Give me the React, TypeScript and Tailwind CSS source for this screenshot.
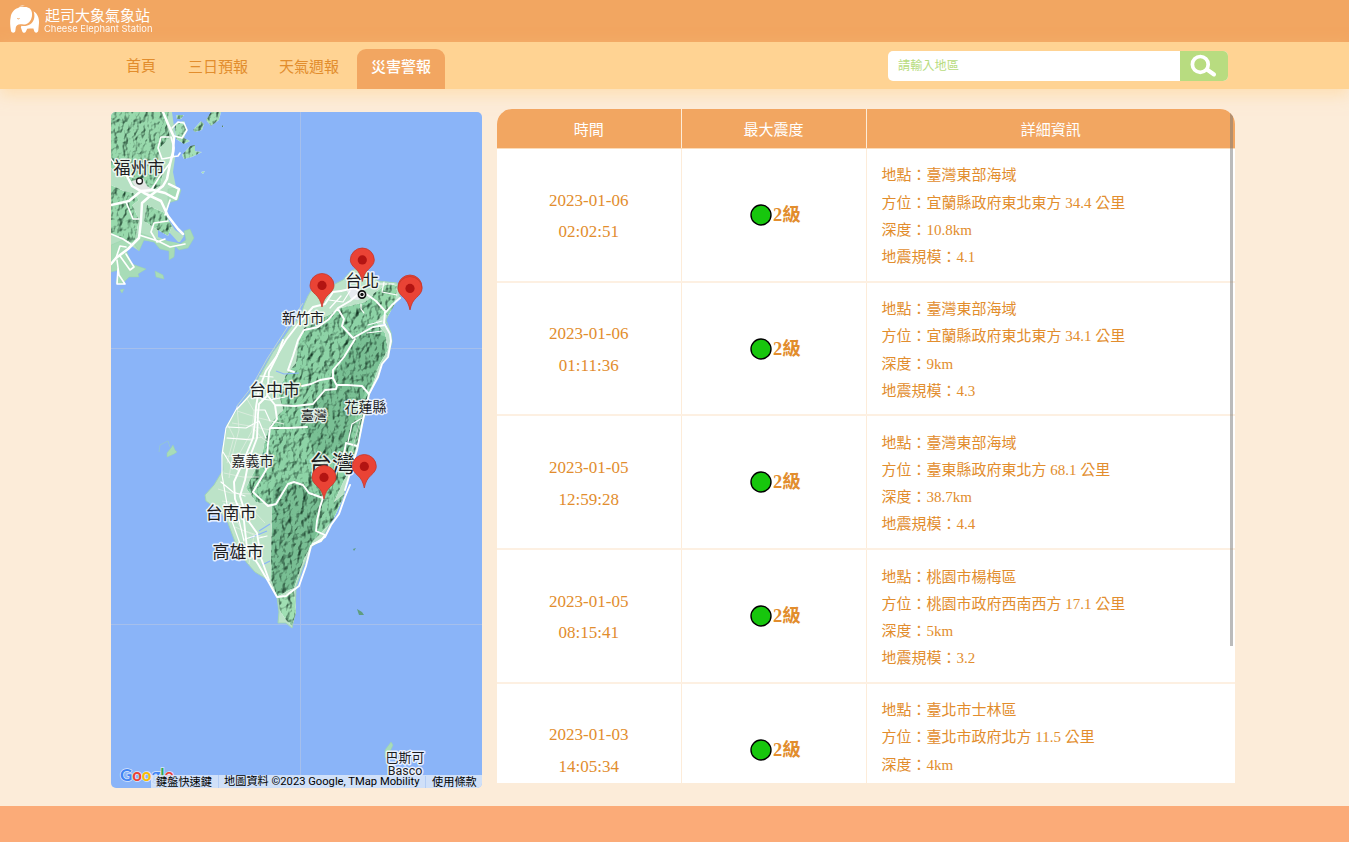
import React from "react";

const cjk = "font-['Noto_Sans_CJK_TC',sans-serif]";

const quakes = [
  { date: "2023-01-06", time: "02:02:51", place: "臺灣東部海域", dir: "宜蘭縣政府東北東方 34.4 公里", depth: "10.8km", mag: "4.1" },
  { date: "2023-01-06", time: "01:11:36", place: "臺灣東部海域", dir: "宜蘭縣政府東北東方 34.1 公里", depth: "9km", mag: "4.3" },
  { date: "2023-01-05", time: "12:59:28", place: "臺灣東部海域", dir: "臺東縣政府東北方 68.1 公里", depth: "38.7km", mag: "4.4" },
  { date: "2023-01-05", time: "08:15:41", place: "桃園市楊梅區", dir: "桃園市政府西南西方 17.1 公里", depth: "5km", mag: "3.2" },
  { date: "2023-01-03", time: "14:05:34", place: "臺北市士林區", dir: "臺北市政府北方 11.5 公里", depth: "4km", mag: "" },
];

function Elephant() {
  return (
    <svg className="h-[30px] w-[32px] shrink-0" viewBox="0 0 32 30">
      <path
        fill="#fff"
        d="M9 2.900C10.800 1.700 13 1.400 15 2.100C19.500 1.700 22.700 4 23 8C23.500 12.500 21.500 17.500 17.500 19C15.300 20 13 19.300 11.500 19.300C8.500 19.500 7.200 20.500 6.800 22.500L6.300 26C5.900 28.300 2.600 28.300 2 26C1.200 21 .7 16 1.700 12C2.200 7.800 5 4 9 2.900Z"
      />
      <path fill="#fff" d="M10 1.500C12 .3 14.500 0 16 1.100C14 .8 12 .9 10 1.500Z" />
      <path
        fill="#fff"
        d="M24.500 6.200C28.500 8.500 30.300 13 30 18L29.300 25.500C29 28.200 25.800 28.300 25.200 26L24.400 23.500H20.800L18.200 23.800L16.800 26.800C16 28.300 13.800 28 13.200 26.200L11.800 22.200L12.500 20.800C18.200 21.800 23.500 19.300 25 14C25.700 11 25.500 8.500 24.500 6.200Z"
      />
      <path d="M8.200 13.300C9 14.200 10.200 14 10.700 13" stroke="#f2a661" fill="none" strokeWidth="1" />
    </svg>
  );
}

function Pin({ x, y }: { x: number; y: number }) {
  return (
    <g transform={`translate(${x} ${y})`}>
      <path
        d="M0 0C-1.200 -6-3.200-9.500-6.500-12.500C-10-15.500-12-18.500-12-21.500A12 12 0 0 1 12-21.500C12-18.500 10-15.500 6.500-12.500C3.200-9.500 1.200-6 0 0Z"
        fill="#ea4335"
        stroke="#c5372b"
        strokeWidth=".8"
      />
      <circle cy="-21.600" r="4.600" fill="#b31412" />
    </g>
  );
}

function Label({ x, y, s, children }: { x: number; y: number; s: number; children: React.ReactNode }) {
  return (
    <text x={x} y={y} fontSize={s} textAnchor="middle" fill="#1d1d1f" stroke="#fff" strokeWidth="3" strokeOpacity=".8" strokeLinejoin="round" paintOrder="stroke">
      {children}
    </text>
  );
}

const island =
  "M304 305L308 296L311 291L320 287L333 285L343 280L350 272L359 267L367 272L378 281L397 283L400 297L392 307L386 320L391 333L392 342L388 356L382 363L378 377L370 392L366 412L363 422L357 450L345 490L342 500L335 515L325 533L323 540L312 546L303 567L296 587L295 613L292 628L286 623L278 623L279 612L277 597L268 580L255 572L247 563L238 550L228 523L219 510L206 501L205 495L214 485L223 470L222 452L227 425L238 408L250 393L263 370L273 352L282 340L291 327L300 317Z";
const mountains =
  "M341 308L325 317L304 328L298 345L296 363L286 375L278 392L283 410L272 422L266 436L262 455L255 470L246 488L256 502L272 505L271 580L277 597L293 588L302 562L312 542L322 532L333 520L345 493L334 502L348 472L359 440L364 410L371 390L380 362L388 350L385 333L376 322L394 305L397 290L375 294L365 302Z";
const hills =
  "M111 112H169L167 124L170 137L160 148L158 160L164 170L160 186L148 192L133 182L122 176L111 168ZM111 185L124 191L134 193L139 200L130 207L111 214ZM111 206L132 204L139 220L134 244L111 234ZM147 205L165 213L172 226L168 236L156 229L144 221Z";
const plain =
  "M111 112H172L175 134L172 146L175 158L173 172L176 187L179 189L169 204L166 216L175 230L184 236L180 242L160 243L143 240L139 251L130 245L125 256L111 268Z";

function TaiwanMap() {
  return (
    <svg className="block h-full w-full" viewBox="111 112 371 676" fontFamily="'Noto Sans CJK TC', sans-serif">
      <defs>
        <filter id="relief" x="0%" y="0%" width="100%" height="100%" colorInterpolationFilters="sRGB">
          <feTurbulence type="fractalNoise" baseFrequency=".19 .14" numOctaves="4" seed="8" result="n" />
          <feDiffuseLighting in="n" surfaceScale="2.700" diffuseConstant="1.280" lightingColor="#ffffff" result="l">
            <feDistantLight azimuth="215" elevation="50" />
          </feDiffuseLighting>
          <feComponentTransfer in="l" result="soft">
            <feFuncR type="linear" slope=".9" intercept=".1" />
            <feFuncG type="linear" slope=".78" intercept=".22" />
            <feFuncB type="linear" slope=".82" intercept=".18" />
          </feComponentTransfer>
          <feBlend in="SourceGraphic" in2="soft" mode="multiply" result="b" />
          <feComposite in="b" in2="SourceGraphic" operator="in" />
        </filter>
      </defs>
      <rect x="111" y="112" width="371" height="676" fill="#8ab4f8" />
      <path d="M300.500 112V788M111 348.500H482M111 624.500H482" stroke="#a5bfec" strokeWidth="1" />

      <path d={plain} fill="#b5e0c2" />
      <g fill="#a8dcb7" stroke="#9ad3ad" strokeWidth=".5">
        <path d="M168 189L177 188L181 190L178 200L168 203Z" />
        <path d="M111 245L140 233L162 241L172 240L180 244L186 240L184 231L190 229L194 238L188 248L179 250L175 246L174 257L169 260L169 251L160 249L154 242L144 240L139 251L133 242L126 250L132 264L146 269L138 274L139 277L129 277L122 284L116 283L119 270L111 272Z" />
        <path d="M155 271L163 275L164 279L156 277ZM120 290L124 289L122 293Z" />
        <path d="M385 750L391 742L393 745L388 756L385 758ZM167 453L171 448L173 445L175 450L177 452L174 454L167 457Z" />
      </g>
      <path d="M159 452L160 445L168 441L170 447" fill="none" stroke="#93c5d6" strokeWidth="1" />
      <path d="M357 609L362 612L364 615L359 615ZM353 549L356 548L354 551Z" fill="#5f9d80" />
      <path d="M158 226L170 221L169 232L179 243L168 241L158 237Z" fill="#8ab4f8" />
      <g filter="url(#relief)" fill="#a4e0b6">
        <path d="M174 124L184 121L187 130L184 138L190 141L184 144L176 139Z" />
        <path d="M206 120L211 112H221L219 120L211 126Z" />
        <path d="M193 130L201 121L204 124L202 130L195 132Z" />
        <path d="M182 155L190 146L195 145L195 151L202 152L192 157L184 159Z" />
        <path d="M176 115H184L181 119L177 119ZM222 125L224 127L222 127ZM201 172L205 171L203 174Z" />
      </g>
      <path d={hills} fill="#98d9ac" filter="url(#relief)" />
      <path d="M132 181L143 178L147 186L154 190L148 193L138 191Z" fill="#e3e6e4" />

      <path d={island} fill="#bce3c8" stroke="#a2d5b7" />
      <g filter="url(#relief)">
        <path d={mountains} fill="#8dd3a6" />
        <path d="M278 598L294 590L296 613L292 626L286 620L280 611Z" fill="#a0dfb3" />
        <path d="M373 294L388 283L397 286L395 304L388 316L378 311Z" fill="#96d8aa" />
        <path d="M273 487L282 480L290 486L303 484L313 494L321 500L317 533L304 559L294 588L276 594L271 560Z" fill="#78be93" />
        <path d="M330 385L349 347L367 330L386 337L385 355L372 377L356 414L346 460L337 450L320 460L305 430L311 405Z" fill="#79c094" />
      </g>

      <g fill="none" stroke="#d9ecdd" strokeWidth="1">
        <path d="M260 381L271 390L286 388M237 411L259 418L284 424M232 423L250 426L270 430M227 438L248 439L263 437M225 456L244 457L260 460M224 473L243 477L259 477M218 489L231 493L252 494M237 406L239 430L233 452L229 478M222 501L248 505L265 523M231 511L242 530L263 537M235 527L254 535L249 564M247 399L254 411L252 431L236 460M255 430L262 438L268 442M228 425L234 437L227 463" />
      </g>
      <path d="M276 371L284 374L299 373M374 327L386 324L388 330M267 531L250 538M262 565L270 561M259 531L270 524" stroke="#8ab4f8" fill="none" strokeWidth="1.200" />
      <path d="M347 291L357 286L364 297L358 300L351 299Z" fill="#e7eaf0" />
      <g fill="none" stroke="#fff" strokeLinejoin="round" strokeLinecap="round" strokeWidth="1.600">
        <path strokeWidth="2.500" d="M163 112L168 124L174 137L173 152L170 164L167 179L163 186L150 196L142 203L141 221L139 238L128 249L116 258L111 264" />
        <path strokeWidth="2.500" d="M125 172L132 186L144 193L161 201L168 216L178 229L183 234M111 205L129 201L141 191L153 190L165 193L176 199L179 189L169 184" />
        <path d="M169 137L161 137L158 148L162 159L173 157L174 148L171 137M172 128L178 122L184 123L187 130L182 138L174 136M171 157L178 156L180 153M170 163L160 176L151 190M111 234L123 239L132 245M139 235L158 241L170 247L185 244M151 232L157 242L165 239M126 202L133 219L139 219M116 258L120 246L126 247M120 256L130 270L134 267L126 254M117 260L119 275L125 284L117 284L118 268M151 232L154 223L168 221M170 200L165 215M111 159L122 174L133 177" />
      </g>
      <g fill="none" stroke="#fff" strokeLinejoin="round" strokeLinecap="round" strokeWidth="1.900">
        <path d="M400 298L392 305L386 312L376 301L362 291M385 312L384 323L390 334L391 341L388 357L382 364L378 377L369 394L363 420L357 450L345 490M341 291L333 292L325 304L313 307L299 323L286 340L276 357L266 371L259 389L256 407L255 421L253 438L243 462L234 482L235 499L244 521L247 548L258 564L268 581L277 597L286 596L291 592L299 586L306 566L311 546L325 537L331 525L339 514L345 497L350 485" />
        <path d="M362 291L350 301L338 308L329 319L318 327L304 330L298 340L293 356L288 370L294 372M283 340L277 356L269 372L267 396L259 404L258 414L257 438L249 459L245 480L240 496L247 519L257 533L261 558L269 580M363 293L354 288L341 291M338 309L344 319L342 326L353 338L373 327L385 325M355 339L344 357L333 370L333 378L337 386M332 378L320 380L311 384L302 386M275 405L295 406L313 404L325 390L336 389L337 385L347 385L362 386L369 394M268 396L275 405L277 419L270 428L268 444L266 470L253 492L268 506L276 504L288 484L294 482L303 485L309 493L323 498L330 480L343 459L346 443L357 446M270 428L288 428L307 427M323 498L320 507L317 521L316 531L325 535L321 541L313 544" />
        <path strokeWidth="1.200" d="M384 282L382 292L397 295M378 284L394 284M329 300L343 302L350 291M341 296L330 308M260 376L273 377M261 399L270 400L285 397M228 427L246 428L259 421L266 438M227 438L252 440M223 452L231 465L238 470M221 482L233 492L245 496M224 504L239 520L244 541M267 536L259 538M255 536L245 539M255 410L265 410L270 421M237 409L250 395M348 442L352 424L362 418M361 304V309L364 313M382 321L368 325M382 331L367 333M237 408L226 428L222 455L222 475L228 510L243 552" />
      </g>
      <path d="M303 303L285 331L267 359L251 388L237 406M362 414L347 468" fill="none" stroke="#c3dccb" strokeWidth=".9" />

      <Label x={139} y={173.500} s={17}>福州市</Label>
      <circle cx="139.500" cy="181" r="3" fill="#fff" stroke="#222" strokeWidth="1.300" />
      <Label x={362} y={287} s={17}>台北</Label>
      <circle cx="362" cy="294.500" r="3.600" fill="#fff" stroke="#111" strokeWidth="1.700" />
      <circle cx="362" cy="294.500" r="1.700" fill="#111" />
      <Label x={303} y={323} s={14}>新竹市</Label>
      <Label x={274.500} y={396} s={17}>台中市</Label>
      <Label x={365.500} y={411.500} s={14}>花蓮縣</Label>
      <Label x={314} y={420} s={13}>臺灣</Label>
      <Label x={252.500} y={466} s={14}>嘉義市</Label>
      <Label x={332} y={472} s={23}>台灣</Label>
      <Label x={231} y={518.500} s={17}>台南市</Label>
      <Label x={238} y={558} s={17}>高雄市</Label>
      <Label x={405} y={762} s={13}>巴斯可</Label>
      <g fontFamily="Roboto, sans-serif"><Label x={405} y={775} s={12.500}>Basco</Label></g>
      <Pin x={362.300} y={281.500} />
      <Pin x={322} y={307} />
      <Pin x={410} y={308.500} />
      <Pin x={410} y={310} />
      <Pin x={364.300} y={488} />
      <Pin x={324} y={499} />
      <text x="120" y="780.500" fontFamily="Lato, sans-serif" fontSize="17" fontWeight="700" textLength="53.500" lengthAdjust="spacingAndGlyphs" stroke="#fff" strokeOpacity=".7" strokeWidth="1.500" paintOrder="stroke">
        <tspan fill="#4285f4">G</tspan><tspan fill="#ea4335">o</tspan><tspan fill="#fbbc04">o</tspan><tspan fill="#4285f4">g</tspan><tspan fill="#34a853">l</tspan><tspan fill="#ea4335">e</tspan>
      </text>
    </svg>
  );
}

const tab = "flex h-10 items-center justify-center rounded-t-[9px] w-[88px] pb-[6px] text-[15px]";

export default function App() {
  return (
    <div className={`flex h-[842px] flex-col overflow-hidden bg-[#fcecd9] ${cjk} text-[#e28d2d]`}>
      <header className="flex h-[42px] shrink-0 items-start bg-[#f2a661] pl-[9px] pt-[5px] text-white">
        <Elephant />
        <div className="ml-[4px]">
          <div className="text-[15px] leading-[19px]">起司大象氣象站</div>
          <div className="-ml-px font-['Inter',sans-serif] text-[9.400px] leading-[9px] whitespace-nowrap opacity-90">Cheese Elephant Station</div>
        </div>
      </header>

      <nav className="flex h-[47px] shrink-0 items-end justify-between bg-[#ffd393] pl-[111px] pr-[121px] shadow-[0_6px_14px_#ffd39388]">
        <div className="flex">
          <a className="flex h-10 w-[60px] items-center justify-center pb-[7px] text-[15px]">首頁</a>
          <a className={`${tab} ml-[3px]`}>三日預報</a>
          <a className={`${tab} ml-[3px]`}>天氣週報</a>
          <a className={`${tab} ml-[4px] bg-[#f2a661] font-medium text-white`}>災害警報</a>
        </div>
        <div className="mb-2 flex h-[30px] w-[340px] overflow-hidden rounded-[5px] bg-white">
          <input placeholder="請輸入地區" className="min-w-0 flex-1 px-[10px] pb-[2px] text-[12.200px] outline-none placeholder:text-[#b8dc80]" />
          <button className="flex w-[48px] items-center justify-center bg-[#b8dc80]">
            <svg className="h-[24px] w-[28px]" viewBox="0 0 28 24" fill="none" stroke="#fff">
              <circle cx="10.300" cy="10.400" r="7.900" strokeWidth="3.700" />
              <path d="M17 15.500L24 20.500" strokeWidth="4" strokeLinecap="round" />
            </svg>
          </button>
        </div>
      </nav>

      <main className="flex flex-1 gap-[15px] pl-[111px] pt-5">
        <section className="relative mt-[3px] h-[676px] w-[371px] overflow-hidden rounded-[5px]">
          <TaiwanMap />
          <div className="absolute bottom-0 right-0 flex h-[13px] w-[331px] items-center bg-[#dce7f8]/85 text-[11.200px] leading-[12px] whitespace-nowrap text-black">
            <span className="w-[68px] border-r border-[#b4cdf4] pb-px pl-[5px]">鍵盤快速鍵</span>
            <span className="w-[207px] border-r border-[#b4cdf4] pl-[5px] font-['Roboto','Noto_Sans_CJK_TC',sans-serif] text-[11.200px]">地圖資料 ©2023 Google, TMap Mobility</span>
            <span className="pb-px pl-[6px]">使用條款</span>
          </div>
        </section>

        <section className="relative h-[674px] w-[738px] overflow-hidden rounded-t-[15px] bg-white">
          <div className="grid h-10 grid-cols-[184.500px_185px_1fr] border-b border-[#fcdcb9] bg-[#f2a661] text-[15px] text-white">
            <div className="flex items-center justify-center border-r border-[#fdecd9] pt-[2px]">時間</div>
            <div className="flex items-center justify-center border-r border-[#fdecd9] pt-[2px]">最大震度</div>
            <div className="flex items-center justify-center pt-[2px]">詳細資訊</div>
          </div>
          {quakes.map((q) => (
            <div key={q.date + q.time} className="grid h-[133.700px] grid-cols-[184.500px_185px_1fr] border-b-[2px] border-[#fdf0e2] bg-white font-['Liberation_Serif','Noto_Sans_CJK_TC',serif]">
              <div className="flex flex-col items-center justify-center border-r border-[#fdecd9] pt-[3px] text-[17px] leading-[31.700px]">
                <span>{q.date}</span>
                <span>{q.time}</span>
              </div>
              <div className="flex items-center justify-center gap-[2px] border-r border-[#fdecd9] pl-[4px] text-[18.500px] font-bold">
                <svg className="h-[22px] w-[22px]" viewBox="0 0 22 22">
                  <circle cx="11" cy="11" r="10" fill="#17c60d" stroke="#000" strokeWidth="1.400" />
                </svg>
                <span className="-ml-px leading-[22px]">2級</span>
              </div>
              <div className="flex flex-col justify-center pl-[15px] pt-[4px] text-[15px] leading-[27.200px]">
                <span>地點：{q.place}</span>
                <span>方位：{q.dir}</span>
                <span>深度：{q.depth}</span>
                {q.mag ? <span>地震規模：{q.mag}</span> : <span className="h-[27.200px]" />}
              </div>
            </div>
          ))}
          <div className="absolute right-[2px] top-[3px] h-[534px] w-[3px] bg-[#777]/50" />
        </section>
      </main>
      <footer className="h-9 shrink-0 bg-[#fbab78]" />
    </div>
  );
}
